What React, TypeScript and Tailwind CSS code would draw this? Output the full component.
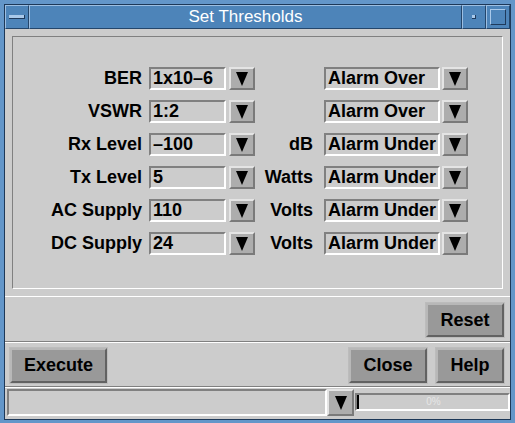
const rows = [
  { label: "BER", value: "1x10\u20136", unit: "", alarm: "Alarm Over" },
  { label: "VSWR", value: "1:2", unit: "", alarm: "Alarm Over" },
  { label: "Rx Level", value: "\u2013100", unit: "dB", alarm: "Alarm Under" },
  { label: "Tx Level", value: "5", unit: "Watts", alarm: "Alarm Under" },
  { label: "AC Supply", value: "110", unit: "Volts", alarm: "Alarm Under" },
  { label: "DC Supply", value: "24", unit: "Volts", alarm: "Alarm Under" },
]

const Arrow = () => (
  <svg width="12" height="14" viewBox="0 0 12 14">
    <polygon points="0,0 12,0 6,14" fill="black" />
  </svg>
)

const DropBtn = ({ className = "" }: { className?: string }) => (
  <div className={`flex items-center justify-center border-2 border-t-[#e4e4e4] border-l-[#e4e4e4] border-b-[#7a7a7a] border-r-[#7a7a7a] bg-[#adadad] ${className}`}>
    <Arrow />
  </div>
)

const Field = ({ text, className = "" }: { text: string, className?: string }) => (
  <div className={`flex items-center pl-[2px] border-2 border-t-[#808080] border-l-[#808080] border-b-white border-r-white bg-[#cccccc] whitespace-nowrap overflow-hidden ${className}`}>
    {text}
  </div>
)

const Btn = ({ label, className = "" }: { label: string, className?: string }) => (
  <div className={`border border-[#bcbcbc] ${className}`}>
    <div className="h-full flex items-center justify-center border-2 border-t-[#b8b8b8] border-l-[#b8b8b8] border-b-[#626262] border-r-[#626262] bg-[#999999]">
      {label}
    </div>
  </div>
)

const Seg = ({ className = "", children }: { className?: string, children?: React.ReactNode }) => (
  <div className={`flex items-center justify-center border border-t-[#9dbfe2] border-l-[#9dbfe2] border-b-[#24466b] border-r-[#24466b] bg-[#4d84b9] ${className}`}>
    {children}
  </div>
)

export default function App() {
  return (
    <div className="w-[515px] h-[423px] bg-[#6396c9] pt-[4px] px-[4px] pb-[3px] font-['Liberation_Sans',Arial,sans-serif]">
      <div className="h-full flex flex-col border border-[#1d3858]">
        {/* title bar */}
        <div className="h-[24px] flex">
          <Seg className="w-[24px]">
            <div className="w-[16px] h-[4px] bg-[#a9c9ea] border-b border-r border-[#1e3a5c]" />
          </Seg>
          <Seg className="flex-1 text-white text-[17px]">Set Thresholds</Seg>
          <Seg className="w-[24px]">
            <div className="w-[4px] h-[4px] bg-[#a9c9ea] border-b border-r border-[#1e3a5c]" />
          </Seg>
          <Seg className="w-[24px]">
            <div className="w-[16px] h-[16px] border border-t-[#a9c9ea] border-l-[#a9c9ea] border-b-[#1e3a5c] border-r-[#1e3a5c]" />
          </Seg>
        </div>

        <div className="flex-1 flex flex-col bg-[#cccccc] text-black font-bold text-[18px]">
          {/* thresholds panel */}
          <div className="h-[267px] pt-[7px] px-[7px]">
            <div className="h-[253px] border border-t-[#808080] border-l-[#808080] border-b-white border-r-white pt-[30px] flex flex-col gap-[10px]">
              {rows.map((r) => (
                <div key={r.label} className="flex h-[23px] items-center">
                  <div className="w-[129px] text-right whitespace-nowrap">{r.label}</div>
                  <Field text={r.value} className="ml-[7px] w-[77px] h-[23px]" />
                  <DropBtn className="ml-[3px] w-[26px] h-[23px]" />
                  <div className="w-[58px] text-right whitespace-nowrap">{r.unit}</div>
                  <Field text={r.alarm} className="ml-[11px] w-[116px] h-[23px]" />
                  <DropBtn className="ml-[2px] w-[26px] h-[23px]" />
                </div>
              ))}
            </div>
          </div>

          {/* reset row */}
          <div className="h-[46px] border-t border-t-white border-b border-b-[#808080] flex justify-end pt-[5px] pr-[5px]">
            <Btn label="Reset" className="w-[80px] h-[36px]" />
          </div>

          {/* action row */}
          <div className="h-[45px] border-t border-t-white border-b border-b-[#808080] flex pt-[4px] pl-[4px] pr-[5px]">
            <Btn label="Execute" className="w-[99px] h-[37px]" />
            <div className="flex-1" />
            <Btn label="Close" className="w-[80px] h-[37px]" />
            <Btn label="Help" className="ml-[7px] w-[70px] h-[37px]" />
          </div>

          {/* status row */}
          <div className="h-[32px] border-t border-t-white flex items-start pt-[1px] pl-[2px]">
            <div className="w-[320px] h-[27px] border-2 border-t-[#808080] border-l-[#808080] border-b-white border-r-white" />
            <DropBtn className="w-[27px] h-[27px]" />
            <div className="ml-[1px] mt-[4px] w-[155px] h-[18px] flex border-2 border-t-[#808080] border-l-[#808080] border-b-white border-r-white">
              <div className="w-[2px] h-full bg-black" />
              <div className="flex-1 flex items-center justify-center text-[10px] font-normal text-[#e6e6e6] leading-none">0%</div>
            </div>
          </div>
        </div>
      </div>
    </div>
  )
}
